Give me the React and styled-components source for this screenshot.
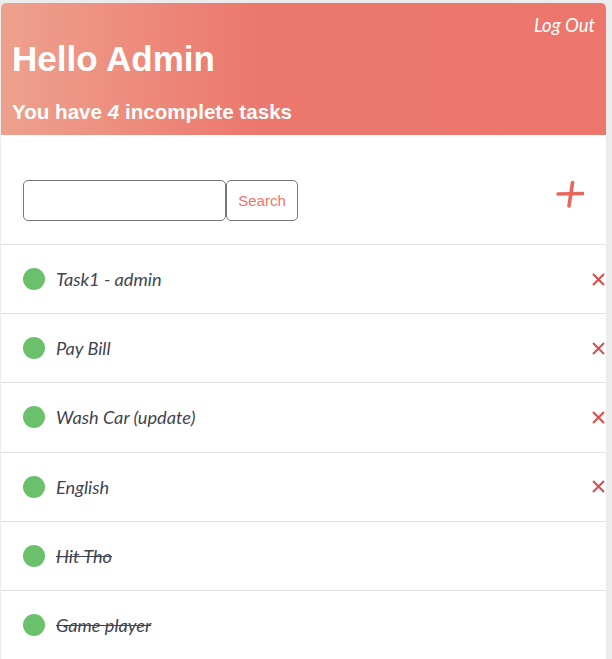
import React from 'react';
import styled, { createGlobalStyle } from 'styled-components';

const GlobalStyle = createGlobalStyle`
  html, body {
    margin: 0;
    padding: 0;
    background: #ececec;
  }
  body {
    padding: 3px 6px 0 1px;
    font-family: "Liberation Sans", Arial, sans-serif;
  }
`;

const Card = styled.div`
  background: #ffffff;
  border-radius: 5px 5px 0 0;
  overflow: hidden;
  height: 656px;
`;

const Header = styled.div`
  height: 132px;
  box-sizing: border-box;
  padding: 0 11px;
  background: linear-gradient(90deg, #eea18d 0%, #ec786d 42%, #ec766c 100%);
  color: #ffffff;
  display: flex;
  flex-direction: column;
`;

const TopRow = styled.div`
  display: flex;
  justify-content: flex-end;
  padding-top: 11px;
  height: 25px;
`;

const LogOut = styled.a`
  font-family: Lato, "Open Sans", sans-serif;
  font-style: italic;
  font-size: 18.5px;
  color: #ffffff;
  cursor: pointer;
`;

const Greeting = styled.h1`
  margin: 0;
  font-size: 35px;
  font-weight: 700;
  line-height: 40px;
`;

const Summary = styled.h3`
  margin: 21px 0 0;
  font-size: 20.6px;
  font-weight: 700;
  line-height: 24px;

  em {
    font-style: italic;
  }
`;

const Toolbar = styled.div`
  display: flex;
  align-items: flex-start;
  justify-content: space-between;
  padding: 45px 22px 23px 22px;
  border-bottom: 1px solid #dee2e6;
`;

const SearchForm = styled.form`
  display: flex;
`;

const SearchInput = styled.input`
  width: 203px;
  height: 41px;
  box-sizing: border-box;
  border: 1px solid #777777;
  border-radius: 5px;
  margin: 0;
  outline: none;
`;

const SearchButton = styled.button`
  height: 41px;
  width: 72px;
  box-sizing: border-box;
  border: 1px solid #777777;
  border-radius: 5px;
  background: #ffffff;
  color: #ec766c;
  font-family: "Liberation Sans", Arial, sans-serif;
  font-size: 15px;
  padding: 0;
  margin: 0;
`;

const AddButton = styled.button`
  border: none;
  background: none;
  padding: 0;
  margin: 0 0 0 0;
  width: 28px;
  height: 28px;
  cursor: pointer;
`;

const TaskRow = styled.div`
  display: flex;
  align-items: center;
  height: 68.2px;
  padding-left: 22px;
  border-bottom: 1px solid #dee2e6;
`;

const Dot = styled.span`
  width: 22px;
  height: 22px;
  border-radius: 50%;
  background: #6bc16b;
  flex-shrink: 0;
`;

const TaskName = styled.span`
  flex: 1;
  margin-left: 11px;
  font-family: Lato, "Open Sans", sans-serif;
  font-style: italic;
  font-size: 18.2px;
  color: #3f4550;
  text-decoration: ${props => (props.done ? 'line-through' : 'none')};
`;

const RemoveButton = styled.button`
  border: none;
  background: none;
  padding: 0;
  margin-right: 1px;
  width: 13px;
  height: 13px;
  display: flex;
`;

const PlusIcon = () => (
  <svg width="28" height="28" viewBox="0 0 28 28">
    <path d="M2 14 L27 13.5" stroke="#e8665c" strokeWidth="3.6" strokeLinecap="round" />
    <path d="M16.5 2.5 L13 26" stroke="#e8665c" strokeWidth="3.6" strokeLinecap="round" />
  </svg>
);

const CrossIcon = () => (
  <svg width="13" height="13" viewBox="0 0 13 13">
    <path d="M1 1 L12 12 M12 1 L1 12" stroke="#dd4b4b" strokeWidth="2" />
  </svg>
);

const tasks = [
  { id: 1, name: 'Task1 - admin', done: false },
  { id: 2, name: 'Pay Bill', done: false },
  { id: 3, name: 'Wash Car (update)', done: false },
  { id: 4, name: 'English', done: false },
  { id: 5, name: 'Hit Tho', done: true },
  { id: 6, name: 'Game player', done: true },
];

const App = () => {
  const remaining = tasks.filter(t => !t.done).length;

  return (
    <>
      <GlobalStyle />
      <Card>
        <Header>
          <TopRow>
            <LogOut>Log Out</LogOut>
          </TopRow>
          <Greeting>Hello Admin</Greeting>
          <Summary>
            You have <em>{remaining}</em> incomplete tasks
          </Summary>
        </Header>

        <Toolbar>
          <SearchForm onSubmit={e => e.preventDefault()}>
            <SearchInput type="text" />
            <SearchButton type="submit">Search</SearchButton>
          </SearchForm>
          <AddButton>
            <PlusIcon />
          </AddButton>
        </Toolbar>

        {tasks.map(task => (
          <TaskRow key={task.id}>
            <Dot />
            <TaskName done={task.done}>{task.name}</TaskName>
            {!task.done && (
              <RemoveButton>
                <CrossIcon />
              </RemoveButton>
            )}
          </TaskRow>
        ))}
      </Card>
    </>
  );
};

export default App;
